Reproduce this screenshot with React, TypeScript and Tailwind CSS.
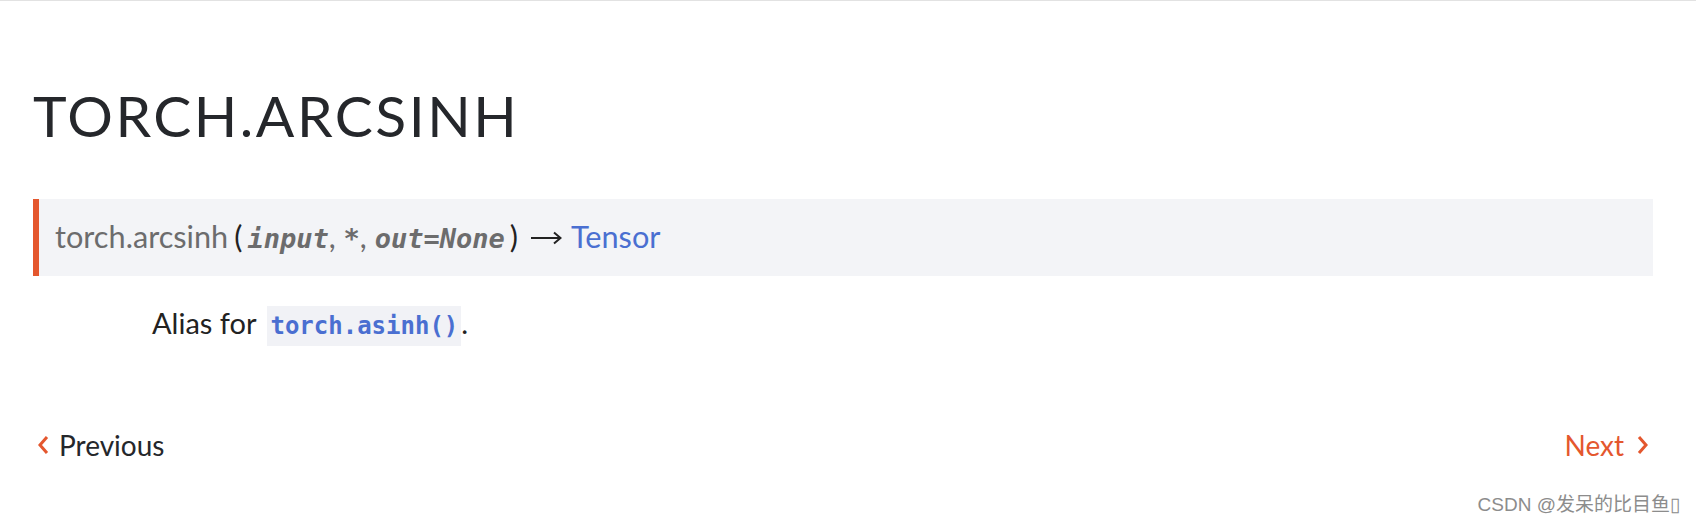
import React from "react";

export default function App() {
  return (
    <div className="relative w-[1696px] h-[522px] overflow-hidden bg-white border-t border-[#e2e2e2] font-['Lato','Noto_Sans',sans-serif]">
      <div className="pl-[33px] pr-[43px] pt-[86px]">
        <h1 className="text-[57px] leading-[57px] tracking-[2.5px] font-normal text-[#25272b]">
          TORCH.ARCSINH
        </h1>

        <div className="mt-[55px] h-[77px] flex items-center bg-[#f3f4f7] border-l-[6px] border-[#e4572e] pl-[16px]">
          <div className="flex items-baseline text-[30.7px] leading-[40px] text-[#6c6c6d] whitespace-nowrap">
            <span>torch.arcsinh</span>
            <span className="text-[#222] ml-[6px]">(</span>
            <span className="font-['DejaVu_Sans_Mono',monospace] italic font-semibold text-[27px] ml-[5px]">input</span>
            <span>,&nbsp;</span>
            <span className="font-['DejaVu_Sans_Mono',monospace] italic font-semibold text-[27px]">*</span>
            <span>,&nbsp;</span>
            <span className="font-['DejaVu_Sans_Mono',monospace] italic font-semibold text-[27px]">out=None</span>
            <span className="text-[#222] ml-[5px]">)</span>
            <svg width="32" height="14" viewBox="0 0 32 14" className="ml-[12px] mr-[9px] self-center">
              <line x1="1" y1="7" x2="30" y2="7" stroke="#222" strokeWidth="2" />
              <polyline points="24,1.5 30.5,7 24,12.5" fill="none" stroke="#222" strokeWidth="2" />
            </svg>
            <span className="text-[#4a6fd1]">Tensor</span>
          </div>
        </div>

        <div className="mt-[27px] pl-[119px] text-[29px] leading-[40px] text-[#222] whitespace-nowrap">
          Alias for
          <span className="ml-[11px] px-[3px] pt-[6px] pb-[6px] bg-[#f1f2f6] text-[#4a6fd1] font-bold font-['DejaVu_Sans_Mono',monospace] text-[24px]">
            torch.asinh()
          </span>
          .
        </div>

        <div className="mt-[79px] flex justify-between items-center text-[28px] leading-[40px]">
          <div className="flex items-center text-[#25272b]">
            <svg width="12" height="20" viewBox="0 0 12 20" className="ml-[4px] mr-[10px]">
              <polyline points="10,2 3,10 10,18" fill="none" stroke="#e4572e" strokeWidth="3" />
            </svg>
            <span>Previous</span>
          </div>
          <div className="flex items-center text-[#e4572e]">
            <span>Next</span>
            <svg width="12" height="20" viewBox="0 0 12 20" className="ml-[13px] mr-[4px]">
              <polyline points="2,2 9,10 2,18" fill="none" stroke="#e4572e" strokeWidth="3" />
            </svg>
          </div>
        </div>
      </div>

      <div className="absolute top-[494px] right-[16px] text-[19px] leading-[20px] text-[#8c8c8c] font-['Liberation_Sans','Noto_Sans_CJK_SC',sans-serif] [text-shadow:0_0_1px_#ffffff]">
        CSDN @发呆的比目鱼▯
      </div>
    </div>
  );
}
